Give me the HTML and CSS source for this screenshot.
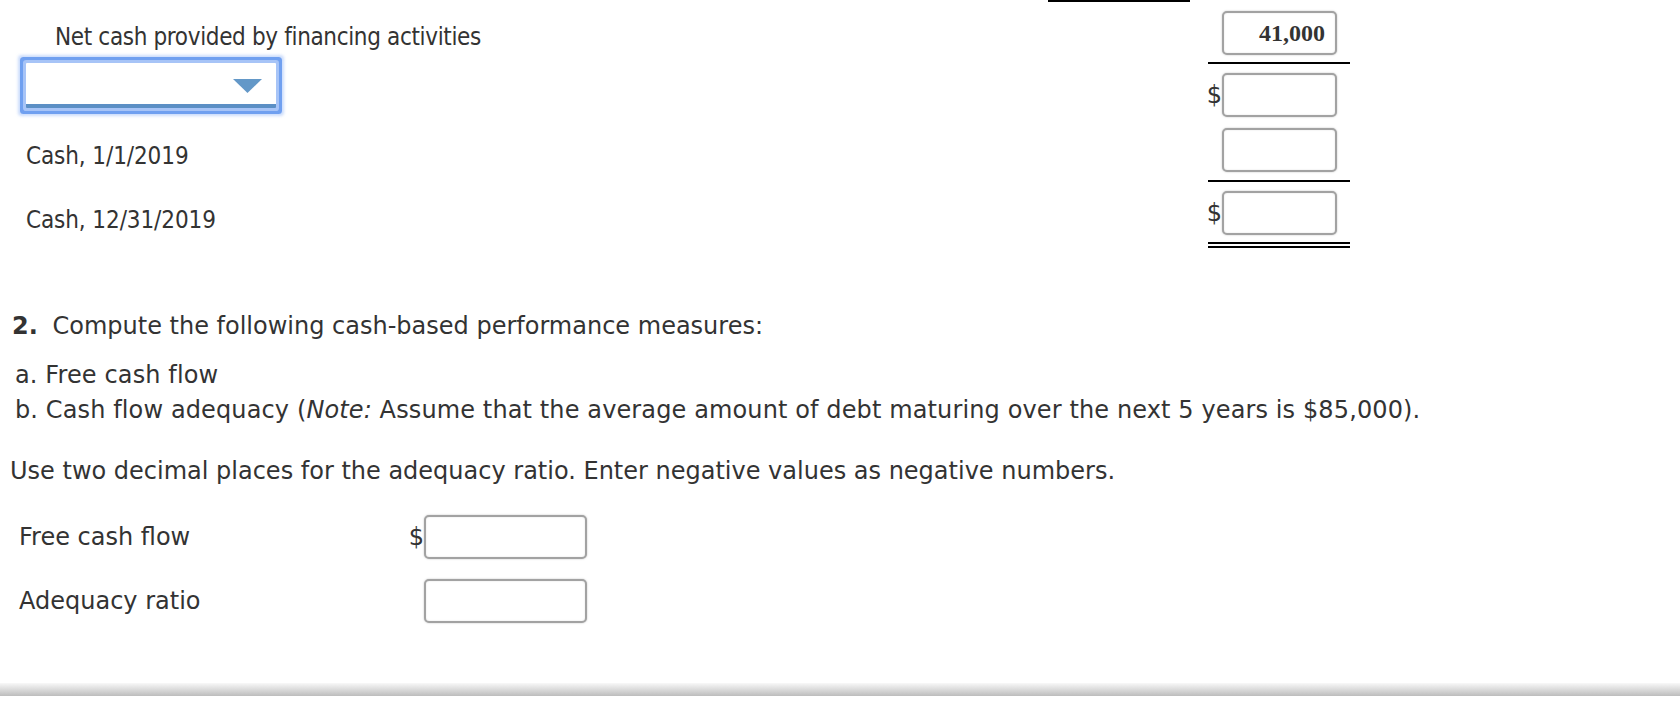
FILE: index.html
```html
<!DOCTYPE html>
<html>
<head>
    <meta charset="utf-8">
    <meta name="viewport" content="width=device-width, initial-scale=1">
    <title>Cash-based performance measures</title>
    <link rel="stylesheet" href="styles.css">
</head>
<body>
    <div class="statement">
        <div class="lead">
            <div class="lead-label">Net cash provided by financing activities</div>
            <div class="picker">
                <svg class="picker-arrow" width="29" height="14" viewBox="0 0 29 14">
                    <polygon points="0,0 29,0 14.5,14" fill="#6398c8"/>
                </svg>
            </div>
        </div>
        <div class="subtotal-rule"></div>
        <div class="amount-cell r1 single">
            <span class="cur"></span>
            <input class="amount given" type="text" value="41,000" readonly>
        </div>
        <div class="amount-cell r2">
            <span class="cur">$</span>
            <input class="amount" type="text">
        </div>
        <div class="row-label r3">Cash, 1/1/2019</div>
        <div class="amount-cell r3 single">
            <span class="cur"></span>
            <input class="amount" type="text">
        </div>
        <div class="row-label r4">Cash, 12/31/2019</div>
        <div class="amount-cell r4 double">
            <span class="cur">$</span>
            <input class="amount" type="text">
        </div>
    </div>

    <div class="task">
        <div class="task-title"><b class="task-num">2.</b> Compute the following cash-based performance measures:</div>
        <div class="task-list">
            <div>a. Free cash flow</div>
            <div>b. Cash flow adequacy (<i>Note:</i> Assume that the average amount of debt maturing over the next 5 years is $85,000).</div>
        </div>
        <div class="task-note">Use two decimal places for the adequacy ratio. Enter negative values as negative numbers.</div>

        <div class="measures">
            <div class="measure-label">Free cash flow</div>
            <span class="cur">$</span>
            <input class="amount wide" type="text">

            <div class="measure-label">Adequacy ratio</div>
            <span class="cur"></span>
            <input class="amount wide" type="text">
        </div>
    </div>

    <div class="footer-bar"></div>
</body>
</html>
```

FILE: styles.css
```css
:root {
    --text: #333333;
    --box-border: #a2a2a2;
    --upper-font: "DejaVu Sans Condensed", "DejaVu Sans", sans-serif;
    --lower-font: "DejaVu Sans", Verdana, sans-serif;
}

* {
    margin: 0;
    padding: 0;
    box-sizing: border-box;
}

body {
    background: #ffffff;
    color: var(--text);
    font-family: var(--lower-font);
    font-size: 24px;
    line-height: 28px;
}

/* statement table */
.statement {
    display: grid;
    grid-template-columns: 1048px 142px 18px 142px;
    grid-template-rows: 64px 58px 60px 66px;
}

.lead {
    grid-column: 1;
    grid-row: 1 / 3;
    padding-top: 23px;
}

.lead-label,
.row-label {
    font-family: var(--upper-font);
    font-stretch: condensed;
}

.lead-label {
    padding-left: 55px;
    letter-spacing: -0.35px;
}

.picker {
    margin: 12px 0 0 26px;
    width: 250px;
    height: 45px;
    background: #ffffff;
    border-bottom: 4px solid #5b8fc5;
    border-radius: 1px;
    box-shadow: 0 0 0 3px #a7c4f7, 0 0 0 6px #70a0f0, 0 0 3px 8px rgba(160, 192, 248, 0.55);
    display: flex;
    justify-content: flex-end;
    align-items: flex-start;
    padding: 16px 14px 0 0;
}

.picker-arrow {
    display: block;
}

.subtotal-rule {
    grid-column: 2;
    grid-row: 1;
    border-top: 2px solid #000000;
}

.amount-cell {
    grid-column: 4;
    display: flex;
    align-items: flex-start;
}

.amount-cell.r1 { grid-row: 1; padding-top: 11px; }
.amount-cell.r2 { grid-row: 2; padding-top: 9px; }
.amount-cell.r3 { grid-row: 3; padding-top: 6px; }
.amount-cell.r4 { grid-row: 4; padding-top: 9px; }

.single {
    border-bottom: 2px solid #000000;
}

.double {
    border-bottom: 6px double #000000;
}

.row-label {
    grid-column: 1;
    padding-left: 26px;
    letter-spacing: -0.1px;
}

.row-label.r3 { grid-row: 3; padding-top: 20px; }
.row-label.r4 { grid-row: 4; padding-top: 24px; }

.cur {
    width: 14px;
    height: 44px;
    display: flex;
    align-items: center;
    justify-content: flex-end;
    font-family: var(--lower-font);
    font-size: 24px;
}

.amount {
    width: 115px;
    height: 44px;
    border: 2px solid var(--box-border);
    border-radius: 5px;
    box-shadow: 0 0 2px rgba(0, 0, 0, 0.25), inset 0 0 2px rgba(0, 0, 0, 0.12);
    background: #ffffff;
    outline: none;
    padding: 0 10px;
    text-align: right;
    font-family: "Liberation Serif", serif;
    font-weight: bold;
    font-size: 24px;
    color: var(--text);
}

.amount.wide {
    width: 163px;
}

/* part 2 */
.task {
    padding-top: 64px;
}

.task-title {
    padding-left: 12px;
}

.task-num {
    margin-right: 7px;
}

.task-list {
    margin-top: 18px;
    padding-left: 15px;
    line-height: 35px;
    letter-spacing: 0.12px;
}

.task-note {
    margin-top: 29px;
    padding-left: 10px;
}

.measures {
    margin-top: 30px;
    padding-left: 19px;
    display: grid;
    grid-template-columns: 389px 16px 163px;
    grid-auto-rows: 44px;
    row-gap: 20px;
    align-items: center;
}

.measures .cur {
    width: 16px;
}

.footer-bar {
    margin-top: 60px;
    height: 13px;
    background: linear-gradient(to bottom, #f8f8f8, #bdbdbd);
}
```
